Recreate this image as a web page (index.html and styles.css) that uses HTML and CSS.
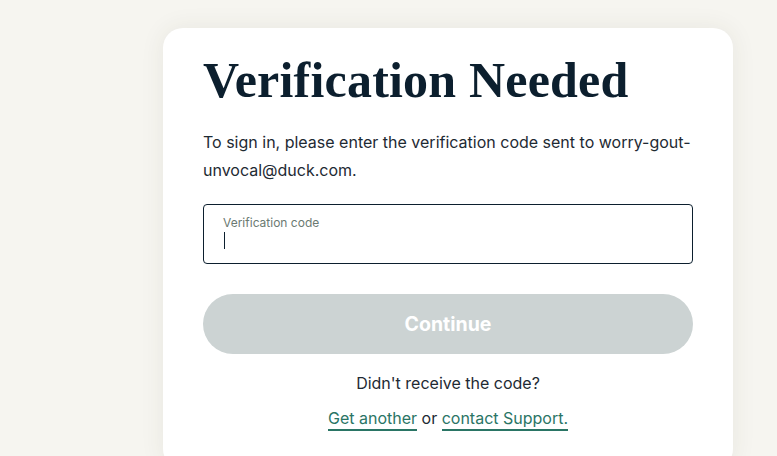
FILE: index.html
```html
<!DOCTYPE html>
<html lang="en">
<head>
    <meta charset="UTF-8">
    <meta name="viewport" content="width=device-width, initial-scale=1.0">
    <title>Verification Needed</title>
    <link rel="stylesheet" href="styles.css">
</head>
<body>
    <div class="page">
        <div class="card">
            <h1>Verification Needed</h1>
            <p class="intro">To sign in, please enter the verification code sent to worry-gout-unvocal@duck.com.</p>

            <label class="field">
                <span class="field-label">Verification code</span>
                <input class="field-input" type="text" autofocus>
                <span class="caret"></span>
            </label>

            <button class="continue-btn" disabled>Continue</button>

            <p class="resend">Didn't receive the code?</p>
            <p class="resend-links"><a href="#">Get another</a> or <a href="#">contact Support.</a></p>
        </div>
    </div>
</body>
</html>
```

FILE: styles.css
```css
:root {
    --page-bg: #f6f5f0;
    --ink: #0c1f2e;
    --text: #1e2a33;
    --muted: #6b7a72;
    --link: #2a7565;
    --disabled: #ccd3d3;
}

* {
    margin: 0;
    padding: 0;
    box-sizing: border-box;
}

body {
    background: var(--page-bg);
    color: var(--text);
    font-family: Inter, 'Noto Sans', sans-serif;
    overflow: hidden;
}

.page {
    padding: 28px 0 0 163px;
}

.card {
    width: 570px;
    background: white;
    border-radius: 20px;
    box-shadow: 0 0 24px rgba(60, 60, 40, 0.08);
    padding: 20px 40px 40px;
}

.card h1 {
    font-family: 'Liberation Serif', serif;
    font-weight: bold;
    font-size: 50px;
    line-height: 64px;
    color: var(--ink);
    letter-spacing: 0.2px;
}

.intro {
    margin-top: 16px;
    font-size: 16px;
    line-height: 28px;
}

.field {
    position: relative;
    display: block;
    margin-top: 20px;
    height: 60px;
    border: 1px solid var(--ink);
    border-radius: 4px;
}

.field-label {
    position: absolute;
    left: 19px;
    top: 10px;
    font-size: 12px;
    color: var(--muted);
}

.field-input {
    width: 100%;
    height: 100%;
    border: none;
    outline: none;
    background: transparent;
    padding: 26px 19px 0;
    font: inherit;
    caret-color: transparent;
}

.caret {
    position: absolute;
    left: 20px;
    top: 27px;
    width: 1px;
    height: 17px;
    background: var(--ink);
}

.continue-btn {
    display: block;
    width: 100%;
    height: 60px;
    margin-top: 30px;
    border: none;
    border-radius: 30px;
    background: var(--disabled);
    color: white;
    font-family: Inter, sans-serif;
    font-weight: 700;
    font-size: 19.5px;
}

.resend {
    margin-top: 18px;
    text-align: center;
    font-size: 16px;
    line-height: 22px;
}

.resend-links {
    margin-top: 13px;
    text-align: center;
    font-size: 16px;
    line-height: 22px;
}

.resend-links a {
    color: var(--link);
    text-decoration: none;
    border-bottom: 2px solid var(--link);
    padding-bottom: 1px;
}
```
